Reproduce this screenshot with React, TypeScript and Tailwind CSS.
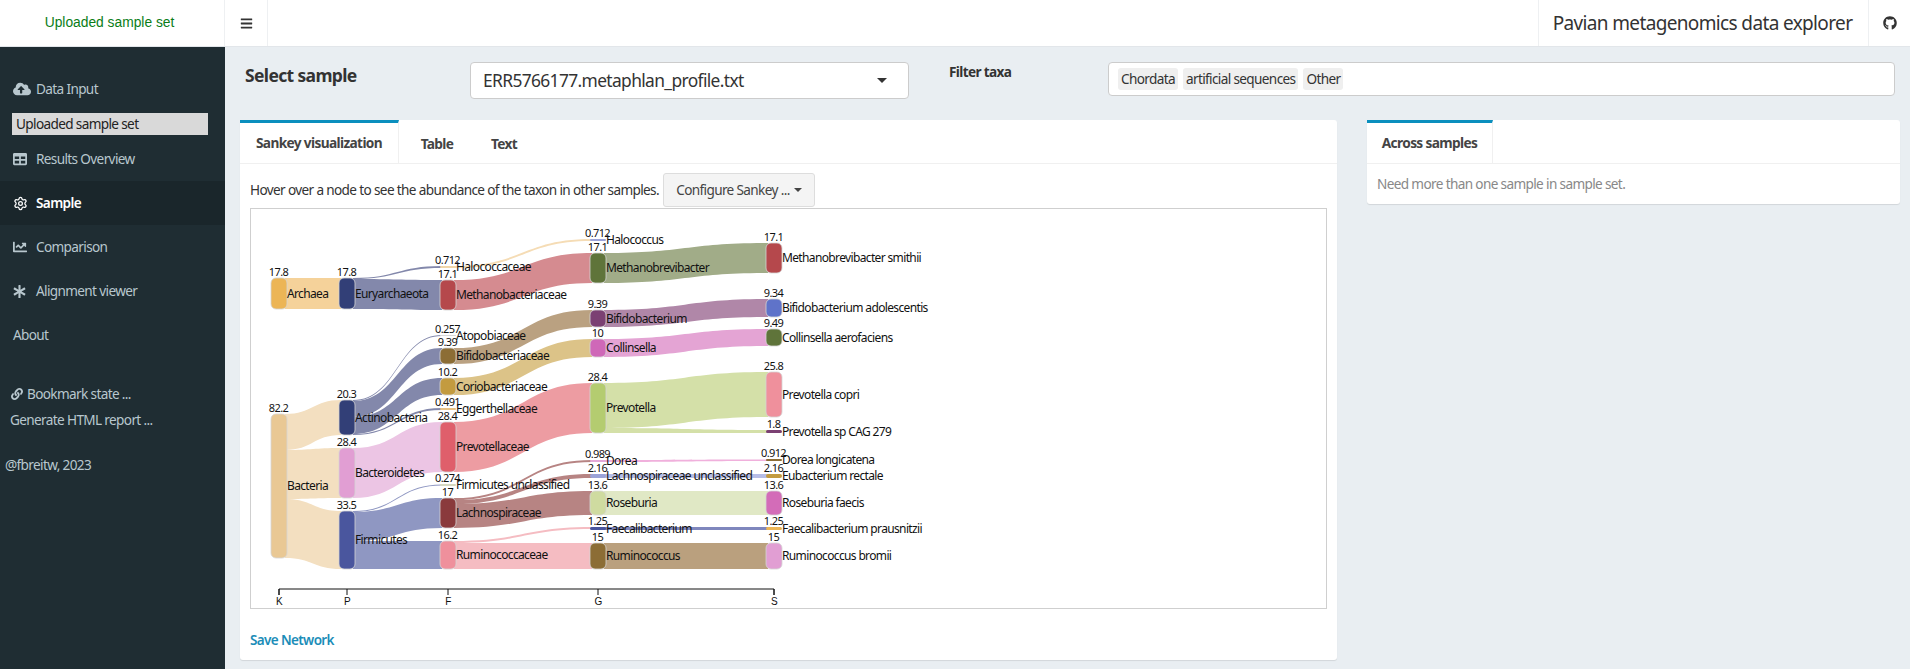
import { FaBars, FaChartLine, FaCloudUploadAlt, FaGithub, FaLink, FaAsterisk, FaTable } from 'react-icons/fa';
import { Settings } from 'lucide-react';
import type { ReactNode } from 'react';

const COL = { K: 271, P: 339, F: 440, G: 590, S: 766 };
const NODE_W = 16;

interface SankeyNode {
  x: number;
  y0: number;
  y1: number;
  color: string;
  label: string;
  value: string;
}

const NODES: SankeyNode[] = [
  { x: COL.K, y0: 278, y1: 309, color: '#ecb556', label: 'Archaea', value: '17.8' },
  { x: COL.K, y0: 414, y1: 558, color: '#e9c894', label: 'Bacteria', value: '82.2' },

  { x: COL.P, y0: 278, y1: 309, color: '#323f77', label: 'Euryarchaeota', value: '17.8' },
  { x: COL.P, y0: 400, y1: 435, color: '#323f77', label: 'Actinobacteria', value: '20.3' },
  { x: COL.P, y0: 448, y1: 498, color: '#e19ed3', label: 'Bacteroidetes', value: '28.4' },
  { x: COL.P, y0: 511, y1: 569, color: '#4a569e', label: 'Firmicutes', value: '33.5' },

  { x: COL.F, y0: 266, y1: 268, color: '#f1d6a8', label: 'Halococcaceae', value: '0.712' },
  { x: COL.F, y0: 280, y1: 310, color: '#b5484c', label: 'Methanobacteriaceae', value: '17.1' },
  { x: COL.F, y0: 335, y1: 336, color: '#d8d8d8', label: 'Atopobiaceae', value: '0.257' },
  { x: COL.F, y0: 348, y1: 364, color: '#8c6d35', label: 'Bifidobacteriaceae', value: '9.39' },
  { x: COL.F, y0: 378, y1: 395, color: '#c39b3f', label: 'Coriobacteriaceae', value: '10.2' },
  { x: COL.F, y0: 408, y1: 410, color: '#e8c183', label: 'Eggerthellaceae', value: '0.491' },
  { x: COL.F, y0: 422, y1: 472, color: '#df5f6b', label: 'Prevotellaceae', value: '28.4' },
  { x: COL.F, y0: 484, y1: 486, color: '#d4d8c0', label: 'Firmicutes unclassified', value: '0.274' },
  { x: COL.F, y0: 498, y1: 528, color: '#8a3a3c', label: 'Lachnospiraceae', value: '17' },
  { x: COL.F, y0: 541, y1: 569, color: '#ef909c', label: 'Ruminococcaceae', value: '16.2' },

  { x: COL.G, y0: 239, y1: 241, color: '#9ba3d8', label: 'Halococcus', value: '0.712' },
  { x: COL.G, y0: 253, y1: 283, color: '#5f743a', label: 'Methanobrevibacter', value: '17.1' },
  { x: COL.G, y0: 310, y1: 327, color: '#7b4073', label: 'Bifidobacterium', value: '9.39' },
  { x: COL.G, y0: 339, y1: 357, color: '#cf68b8', label: 'Collinsella', value: '10' },
  { x: COL.G, y0: 383, y1: 433, color: '#b4cc70', label: 'Prevotella', value: '28.4' },
  { x: COL.G, y0: 460, y1: 462, color: '#e4a8d8', label: 'Dorea', value: '0.989' },
  { x: COL.G, y0: 474, y1: 478, color: '#9ba3d8', label: 'Lachnospiraceae unclassified', value: '2.16' },
  { x: COL.G, y0: 491, y1: 515, color: '#cfdba0', label: 'Roseburia', value: '13.6' },
  { x: COL.G, y0: 527, y1: 530, color: '#4a569e', label: 'Faecalibacterium', value: '1.25' },
  { x: COL.G, y0: 543, y1: 569, color: '#8c6d35', label: 'Ruminococcus', value: '15' },

  { x: COL.S, y0: 243, y1: 273, color: '#b5484c', label: 'Methanobrevibacter smithii', value: '17.1' },
  { x: COL.S, y0: 299, y1: 317, color: '#5f73c9', label: 'Bifidobacterium adolescentis', value: '9.34' },
  { x: COL.S, y0: 329, y1: 346, color: '#5f743a', label: 'Collinsella aerofaciens', value: '9.49' },
  { x: COL.S, y0: 372, y1: 417, color: '#ef909c', label: 'Prevotella copri', value: '25.8' },
  { x: COL.S, y0: 430, y1: 433, color: '#7b4073', label: 'Prevotella sp CAG 279', value: '1.8' },
  { x: COL.S, y0: 459, y1: 461, color: '#8c6d35', label: 'Dorea longicatena', value: '0.912' },
  { x: COL.S, y0: 474, y1: 478, color: '#c39b3f', label: 'Eubacterium rectale', value: '2.16' },
  { x: COL.S, y0: 491, y1: 515, color: '#d36cb8', label: 'Roseburia faecis', value: '13.6' },
  { x: COL.S, y0: 527, y1: 530, color: '#ecb556', label: 'Faecalibacterium prausnitzii', value: '1.25' },
  { x: COL.S, y0: 543, y1: 569, color: '#e19ed3', label: 'Ruminococcus bromii', value: '15' },
];

// from column, source band, target column, target band, colour
type SankeyLink = [number, number, number, number, number, number, string];

const LINKS: SankeyLink[] = [
  [COL.K, 278, 309, COL.P, 278, 309, '#f5d29a'],
  [COL.K, 414, 450, COL.P, 400, 435, '#f3dfc0'],
  [COL.K, 450, 499, COL.P, 448, 498, '#f3dfc0'],
  [COL.K, 499, 558, COL.P, 511, 569, '#f3dfc0'],

  [COL.P, 278, 279, COL.F, 266, 268, '#8388ab'],
  [COL.P, 279, 309, COL.F, 280, 310, '#8388ab'],
  [COL.P, 400, 401, COL.F, 335, 336, '#8388ab'],
  [COL.P, 401, 417, COL.F, 348, 364, '#8388ab'],
  [COL.P, 417, 434, COL.F, 378, 395, '#8388ab'],
  [COL.P, 434, 435, COL.F, 408, 410, '#8388ab'],
  [COL.P, 448, 498, COL.F, 422, 472, '#ecc5e4'],
  [COL.P, 511, 512, COL.F, 484.5, 485.5, '#8f97c2'],
  [COL.P, 512, 541, COL.F, 498, 528, '#8f97c2'],
  [COL.P, 541, 569, COL.F, 541, 569, '#8f97c2'],

  [COL.F, 266, 268, COL.G, 239, 241, '#f5dcb5'],
  [COL.F, 280, 310, COL.G, 253, 283, '#d58b90'],
  [COL.F, 348, 364, COL.G, 310, 327, '#baa181'],
  [COL.F, 378, 395, COL.G, 339, 357, '#dcc388'],
  [COL.F, 422, 472, COL.G, 383, 433, '#ed9ca2'],
  [COL.F, 498, 500, COL.G, 460, 462, '#b78483'],
  [COL.F, 500, 504, COL.G, 474, 478, '#b78483'],
  [COL.F, 504, 528, COL.G, 491, 515, '#b78483'],
  [COL.F, 541, 543, COL.G, 527, 529, '#f5bcc2'],
  [COL.F, 543, 569, COL.G, 543, 569, '#f5bcc2'],

  [COL.G, 253, 283, COL.S, 243, 273, '#a1ac88'],
  [COL.G, 310, 327, COL.S, 299, 317, '#b087a8'],
  [COL.G, 339, 357, COL.S, 329, 346, '#e4a4d4'],
  [COL.G, 383, 428, COL.S, 372, 417, '#d4e0a8'],
  [COL.G, 428, 433, COL.S, 430, 433, '#d4e0a8'],
  [COL.G, 460, 462, COL.S, 459.5, 461, '#f0b0dc'],
  [COL.G, 474, 478, COL.S, 474, 478, '#b6bde6'],
  [COL.G, 491, 515, COL.S, 491, 515, '#e0e8c5'],
  [COL.G, 527, 530, COL.S, 527, 530, '#7f87bd'],
  [COL.G, 543, 569, COL.S, 543, 569, '#baa07e'],
];

const AXIS: [string, number][] = [['K', 279], ['P', 347], ['F', 448], ['G', 598], ['S', 774]];

function linkPath([a, a0, a1, b, b0, b1]: SankeyLink) {
  const x0 = a + NODE_W - 2;
  const x1 = b + 2;
  const m = (x0 + x1) / 2;
  return `M${x0} ${a0}C${m} ${a0} ${m} ${b0} ${x1} ${b0}L${x1} ${b1}C${m} ${b1} ${m} ${a1} ${x0} ${a1}Z`;
}

function Sankey() {
  return (
    <svg viewBox="251 209 1075 399" className="block w-full h-full">
      {LINKS.map((l, i) => (
        <path key={i} d={linkPath(l)} fill={l[6]} />
      ))}
      {NODES.map((n) => (
        <g key={n.label}>
          <rect
            x={n.x}
            y={n.y0}
            width={NODE_W}
            height={n.y1 - n.y0}
            rx={Math.min(5, (n.y1 - n.y0) / 2)}
            fill={n.color}
            stroke="#d4d4d4"
            strokeOpacity={0.8}
            strokeWidth={n.y1 - n.y0 > 5 ? 1 : 0}
          />
          <text x={n.x + NODE_W / 2 - 0.5} y={n.y0 - 2} textAnchor="middle" fontSize={11} fill="#111">
            {n.value}
          </text>
          <text x={n.x + NODE_W} y={(n.y0 + n.y1) / 2 + 4} fontSize={12} fill="#111">
            {n.label}
          </text>
        </g>
      ))}
      <path d="M279 595V589H774V595" fill="none" stroke="#111" strokeWidth={1} />
      {AXIS.map(([t, x]) => (
        <g key={t}>
          <line x1={x} x2={x} y1={589} y2={595} stroke="#111" />
          <text x={x} y={605} textAnchor="middle" fontSize={10} fill="#111" className="font-['Liberation_Sans',sans-serif]">
            {t}
          </text>
        </g>
      ))}
    </svg>
  );
}

function MenuItem({ icon, label, active }: { icon?: ReactNode; label: string; active?: boolean }) {
  return (
    <div className={`h-[44px] flex items-center pl-[13px] ${active ? 'bg-[#1a262b] text-white font-semibold' : 'text-[#b8c7ce]'}`}>
      {icon && <span className="w-[23px] flex items-center">{icon}</span>}
      <span>{label}</span>
    </div>
  );
}

function TabHead({ label, active, w }: { label: string; active?: boolean; w: string }) {
  return (
    <div
      className={`${w} h-[43px] flex items-center justify-center font-bold text-[13.7px] text-[#444] ${
        active ? 'border-t-[3px] border-t-[#0a8fbe] border-r border-r-[#f0f0f0] bg-white relative pt-px' : 'pt-[5px]'
      }`}
    >
      {label}
    </div>
  );
}

export default function App() {
  return (
    <div className="h-screen w-full overflow-hidden bg-[#e9eef2] flex flex-col font-['Noto_Sans',sans-serif] text-[#333] tracking-[-0.04em]">
      {/* Header */}
      <header className="h-[47px] shrink-0 bg-white flex items-stretch border-b border-[#e2e6ea]">
        <div className="w-[225px] pr-[5px] flex items-center justify-center border-r border-[#eef0f2] font-['Liberation_Sans',sans-serif] tracking-normal text-[13.8px] text-[#0a7d17]">
          Uploaded sample set
        </div>
        <div className="w-[43px] flex items-center justify-center border-r border-[#eef0f2] text-[#333]">
          <FaBars size={13} />
        </div>
        <div className="flex-1" />
        <div className="w-[330px] pr-[2px] flex items-center justify-center border-l border-[#eef0f2] text-[19px] text-[#333]">
          Pavian metagenomics data explorer
        </div>
        <div className="w-[42px] flex items-center justify-center border-l border-[#eef0f2]">
          <FaGithub size={14} />
        </div>
      </header>

      <div className="flex-1 flex min-h-0">
        {/* Sidebar */}
        <aside className="w-[225px] shrink-0 bg-[#1f2d33] pt-[20px] text-[13.6px]">
          <MenuItem icon={<FaCloudUploadAlt size={18} />} label="Data Input" />
          <div className="mt-[2px] mb-[2px] ml-[12px] w-[196px] h-[22px] bg-[#d9d9d9] text-[#222] flex items-center pl-[4px]">
            Uploaded sample set
          </div>
          <MenuItem icon={<FaTable size={14} />} label="Results Overview" />
          <MenuItem icon={<Settings size={15} />} label="Sample" active />
          <MenuItem icon={<FaChartLine size={14} />} label="Comparison" />
          <MenuItem icon={<FaAsterisk size={13} />} label="Alignment viewer" />
          <MenuItem label="About" />
          <div className="mt-[24px] pl-[11px] h-[26px] flex items-center gap-[4px] text-[#b8c7ce]">
            <FaLink size={12} />
            <span>Bookmark state ...</span>
          </div>
          <div className="pl-[10px] h-[26px] flex items-center text-[#b8c7ce]">Generate HTML report ...</div>
          <div className="mt-[22px] pl-[5px] text-[#b8c7ce]">@fbreitw, 2023</div>
        </aside>

        {/* Main */}
        <main className="flex-1 min-w-0 pl-[15px] pr-[10px]">
          <div className="h-[73px] flex items-start pt-[15px]">
            <div className="w-[230px] pl-[5px] text-[17.5px] font-bold leading-[26px]">Select sample</div>
            <div className="w-[439px] h-[37px] bg-white border border-[#ccc] rounded-[4px] flex items-center justify-between pl-[12px] pr-[21px] text-[17.4px] text-[#333]">
              <span>ERR5766177.metaphlan_profile.txt</span>
              <span className="w-0 h-0 border-x-[5px] border-x-transparent border-t-[5px] border-t-[#333]" />
            </div>
            <div className="w-[199px] pl-[40px] text-[13.6px] font-bold">Filter taxa</div>
            <div className="w-[787px] h-[34px] bg-white border border-[#ccc] rounded-[4px] flex items-center gap-[5px] pl-[9px] text-[13.6px]">
              <span className="bg-[#efefef] rounded-[3px] px-[3px] h-[22px] flex items-center">Chordata</span>
              <span className="bg-[#efefef] rounded-[3px] px-[3px] h-[22px] flex items-center">artificial sequences</span>
              <span className="bg-[#efefef] rounded-[3px] px-[3px] h-[22px] flex items-center">Other</span>
            </div>
          </div>

          <div className="flex items-start gap-[30px]">
            {/* Sankey card */}
            <section className="w-[1097px] h-[540px] bg-white rounded-[3px] shadow-[0_1px_1px_rgba(0,0,0,0.1)] flex flex-col">
              <div className="flex border-b border-[#f0f0f0] h-[44px]">
                <TabHead label="Sankey visualization" active w="w-[159px]" />
                <TabHead label="Table" w="w-[76px]" />
                <TabHead label="Text" w="w-[58px]" />
              </div>
              <div className="px-[10px] flex-1 flex flex-col min-h-0">
                <div className="h-[44px] flex items-center pt-[8px] text-[13.6px]">
                  <span>Hover over a node to see the abundance of the taxon in other samples.</span>
                  <button className="ml-[4px] w-[152px] h-[34px] bg-[#f4f4f4] border border-[#ddd] rounded-[3px] flex items-center justify-center gap-[4px] text-[13.6px] text-[#444]">
                    Configure Sankey ...
                    <span className="w-0 h-0 border-x-[4px] border-x-transparent border-t-[4px] border-t-[#444]" />
                  </button>
                </div>
                <div className="h-[401px] border border-[#cfcfcf]">
                  <Sankey />
                </div>
                <a className="mt-[21px] text-[13.5px] font-semibold text-[#1b8db8] leading-[20px]">Save Network</a>
              </div>
            </section>

            {/* Across samples card */}
            <section className="w-[533px] h-[84px] bg-white rounded-[3px] shadow-[0_1px_1px_rgba(0,0,0,0.1)]">
              <div className="flex border-b border-[#f0f0f0] h-[44px]">
                <TabHead label="Across samples" active w="w-[126px]" />
              </div>
              <div className="pl-[10px] h-[40px] flex items-center text-[13.6px] text-[#888]">
                Need more than one sample in sample set.
              </div>
            </section>
          </div>
        </main>
      </div>
    </div>
  );
}
